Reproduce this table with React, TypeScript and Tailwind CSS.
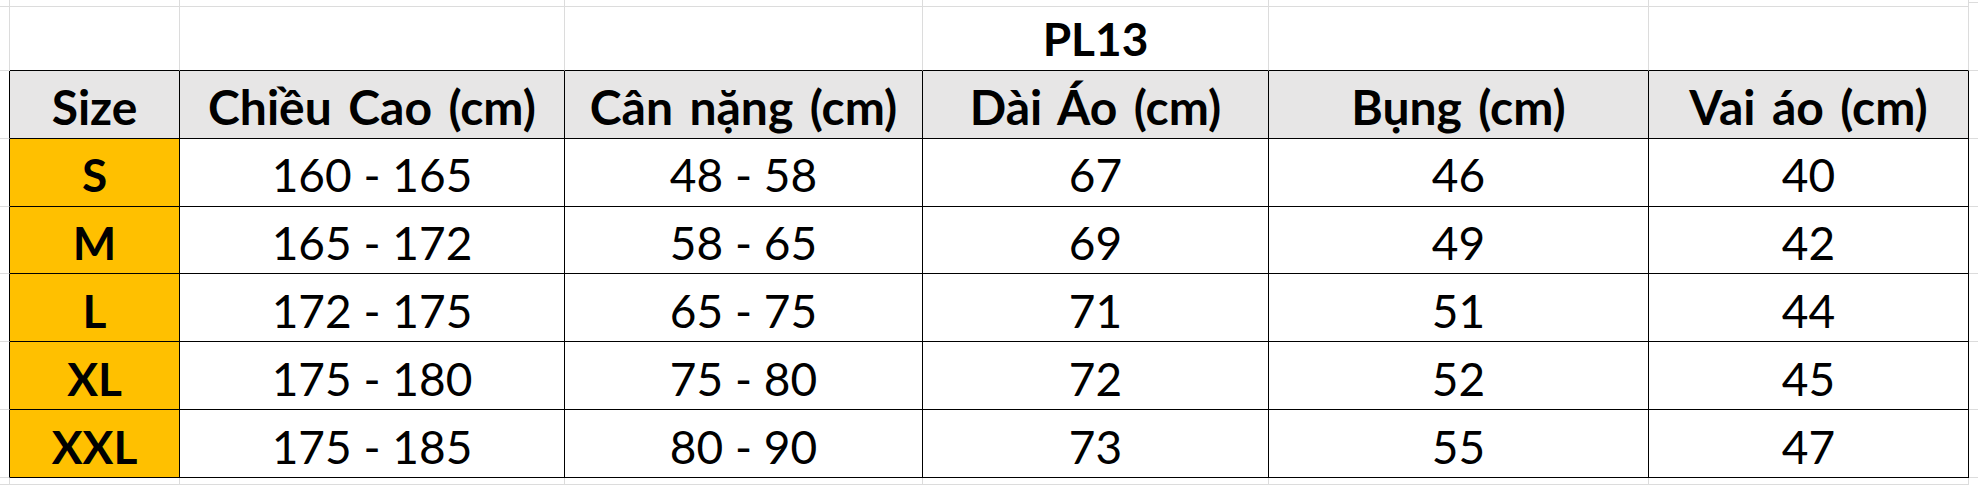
import { clsx } from 'clsx'

// Column widths in px, border included. Edge columns are bare sheet gridlines.
const COLS = [10, 170, 385, 358, 346, 380, 320]

const HEAD = [
  'Size',
  'Chiều Cao (cm)',
  'Cân nặng (cm)',
  'Dài Áo (cm)',
  'Bụng (cm)',
  'Vai áo (cm)',
]

const ROWS = [
  ['S', '160 - 165', '48 - 58', '67', '46', '40'],
  ['M', '165 - 172', '58 - 65', '69', '49', '42'],
  ['L', '172 - 175', '65 - 75', '71', '51', '44'],
  ['XL', '175 - 180', '75 - 80', '72', '52', '45'],
  ['XXL', '175 - 185', '80 - 90', '73', '55', '47'],
]

const GRID = 'border-[#dcdcdc]'

function Cell({
  w,
  right,
  bottom,
  className,
  children,
}: {
  w: number
  right?: boolean
  bottom?: boolean
  className?: string
  children?: React.ReactNode
}) {
  return (
    <div
      style={{ width: w }}
      className={clsx(
        'flex h-full shrink-0 items-center justify-center border-r border-b pt-[6px] whitespace-nowrap',
        right ? 'border-r-black' : 'border-r-[#dcdcdc]',
        bottom ? 'border-b-black' : 'border-b-[#dcdcdc]',
        className,
      )}
    >
      {children}
    </div>
  )
}

function Row({
  h,
  children,
}: {
  h: string
  children: React.ReactNode
}) {
  return <div className={clsx('flex w-full', h)}>{children}</div>
}

export default function App() {
  return (
    <div
      className="flex h-[485px] w-[1978px] flex-col overflow-hidden bg-white text-[46px] leading-none text-black"
      style={{ fontFamily: 'Lato, "Noto Sans", sans-serif' }}
    >
      {/* sheet row above the title */}
      <Row h="h-[3px]">
        {COLS.map((w, i) => (
          <Cell key={i} w={w} className="pt-0" />
        ))}
        <div className={clsx('flex-1 border-b', GRID)} />
      </Row>

      {/* title row: PL13 sits in the Dài Áo column */}
      <Row h="h-[68px]">
        {COLS.map((w, i) => (
          <Cell key={i} w={w} bottom={i > 0} className="pt-[5px] font-bold">
            {i === 4 ? 'PL13' : null}
          </Cell>
        ))}
        <div className={clsx('flex-1 border-b', GRID)} />
      </Row>

      {/* header */}
      <Row h="h-[68px]">
        <Cell w={COLS[0]} right />
        {HEAD.map((label, i) => (
          <Cell
            key={label}
            w={COLS[i + 1]}
            right
            bottom
            className="bg-[#e7e6e6] text-[48px] font-bold [word-spacing:0.1em]"
          >
            {label}
          </Cell>
        ))}
        <div className={clsx('flex-1 border-b', GRID)} />
      </Row>

      {ROWS.map((row) => (
        <Row key={row[0]} h="h-[68px]">
          <Cell w={COLS[0]} right />
          {row.map((v, i) => (
            <Cell
              key={i}
              w={COLS[i + 1]}
              right
              bottom
              className={clsx(i === 0 && 'bg-[#ffc000] font-bold')}
            >
              {v}
            </Cell>
          ))}
          <div className={clsx('flex-1 border-b', GRID)} />
        </Row>
      ))}

      {/* sheet row below the table */}
      <Row h="flex-1">
        {COLS.map((w, i) => (
          <Cell key={i} w={w} className="pt-0" />
        ))}
        <div className="flex-1" />
      </Row>
    </div>
  )
}
